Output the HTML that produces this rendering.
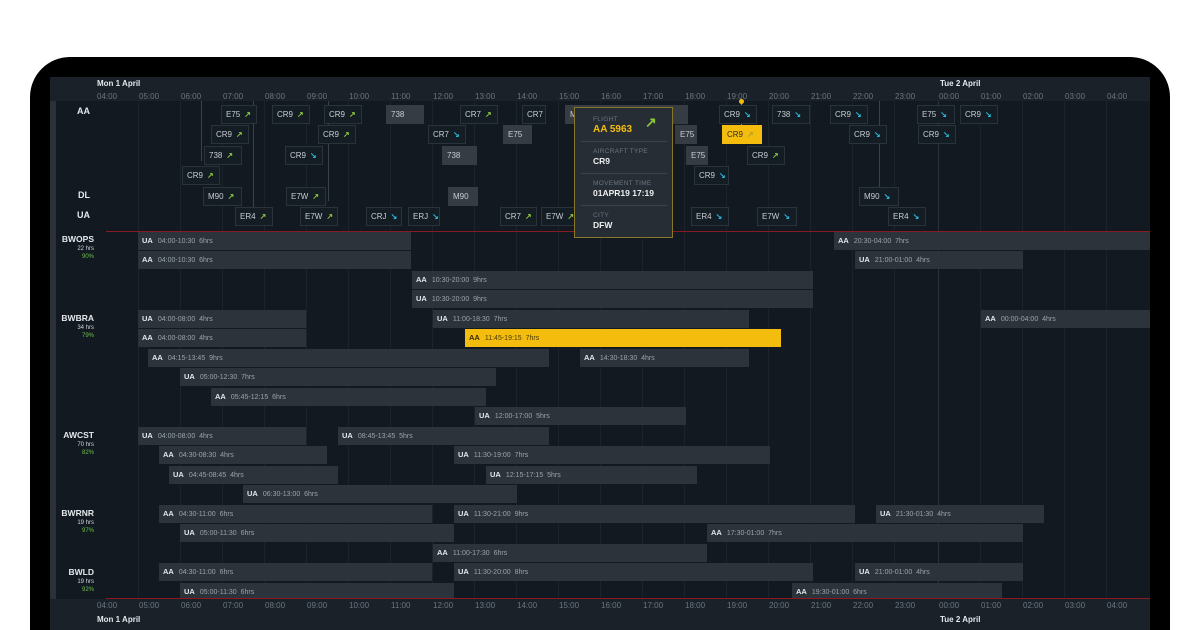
<!DOCTYPE html>
<html style="width:1200px;height:630px;overflow:hidden"><head><meta charset="utf-8"><style>
*{margin:0;padding:0;box-sizing:border-box}
html,body{width:1200px;height:630px;overflow:hidden}
body{background:#fff;position:relative;font-family:"Liberation Sans",sans-serif}
#dev{position:absolute;left:30px;top:57px;width:1140px;height:573px;background:#000;border-radius:40px 40px 0 0}
#scr{position:absolute;left:50px;top:77px;width:1100px;height:553px;background:#121921;overflow:hidden}
.a{position:absolute}
.hdr{left:0;top:0;width:1100px;height:24px;background:#1a2129}
.ftr{left:0;top:522px;width:1100px;height:31px;background:#1a2129}
.side{left:0;top:24px;width:6px;height:498px;background:#2a3138}
.hl{position:absolute;font-size:8px;color:#6b7680}
.day{position:absolute;font-size:8px;font-weight:bold;color:#e4e8ec}
.grid{position:absolute;width:1px;background:#1b232b}
.chip{position:absolute;height:19px;border:1px solid #2a333c;background:#141c24;font-size:8px;color:#c8cdd2;line-height:17px;padding-left:4px;white-space:nowrap}
.chip.f{background:#353c43;border-color:#353c43}
.chip.y{background:#f4bd0e;border-color:#f4bd0e;color:#2a2a1a}
.u{color:#8cc63f;font-weight:bold;margin-left:4px}
.d{color:#29b6d8;font-weight:bold;margin-left:4px}
.lbl{position:absolute;font-size:9px;font-weight:bold;color:#e4e8ec;text-align:right;width:40px}
.bar{position:absolute;height:18px;background:#2c333b;font-size:7px;color:#9aa3ab;line-height:18px;padding-left:4px;white-space:nowrap;overflow:hidden}
.bar b{color:#e4e8ec;margin-right:5px;font-size:7.5px}
.bar.y{background:#f4bd0e;color:#4a3a00}
.bar.y b{color:#3a2d00}
.g{position:absolute;text-align:right;width:44px;font-size:6px;line-height:8px;color:#d0d5da}
.g b{font-size:8.5px;color:#e4e8ec;display:block;line-height:11px}
.g i{font-style:normal;color:#6cc04a}
.red{position:absolute;left:56px;width:1044px;height:1px;background:#8a1a22}
.tip{left:524px;top:30px;width:99px;height:131px;background:#262d35;border:1px solid #8a7628}
.tip div{position:absolute;left:18px;font-size:6.5px;color:#6b7680;letter-spacing:.3px}
.tip p{position:absolute;left:18px;font-size:8.5px;font-weight:bold;color:#eef0f2}
.tip hr{position:absolute;left:6px;width:86px;border:0;border-top:1px solid #3a424a}
</style></head><body>
<div id="dev"></div>
<div id="scr">
<div class="a hdr"></div>
<div class="a ftr"></div>
<div class="a side"></div>

<div class="grid" style="left:88px;top:24px;height:498px"></div>
<div class="grid" style="left:130px;top:24px;height:498px"></div>
<div class="grid" style="left:172px;top:24px;height:498px"></div>
<div class="grid" style="left:214px;top:24px;height:498px"></div>
<div class="grid" style="left:256px;top:24px;height:498px"></div>
<div class="grid" style="left:298px;top:24px;height:498px"></div>
<div class="grid" style="left:340px;top:24px;height:498px"></div>
<div class="grid" style="left:382px;top:24px;height:498px"></div>
<div class="grid" style="left:424px;top:24px;height:498px"></div>
<div class="grid" style="left:466px;top:24px;height:498px"></div>
<div class="grid" style="left:508px;top:24px;height:498px"></div>
<div class="grid" style="left:550px;top:24px;height:498px"></div>
<div class="grid" style="left:592px;top:24px;height:498px"></div>
<div class="grid" style="left:634px;top:24px;height:498px"></div>
<div class="grid" style="left:676px;top:24px;height:498px"></div>
<div class="grid" style="left:718px;top:24px;height:498px"></div>
<div class="grid" style="left:760px;top:24px;height:498px"></div>
<div class="grid" style="left:802px;top:24px;height:498px"></div>
<div class="grid" style="left:844px;top:24px;height:498px"></div>
<div class="grid" style="left:888px;top:24px;height:498px;background:#2a323a"></div>
<div class="grid" style="left:930px;top:24px;height:498px"></div>
<div class="grid" style="left:972px;top:24px;height:498px"></div>
<div class="grid" style="left:1014px;top:24px;height:498px"></div>
<div class="grid" style="left:1056px;top:24px;height:498px"></div>

<div class="day" style="left:47px;top:2px">Mon 1 April</div>
<div class="day" style="left:890px;top:2px">Tue 2 April</div>
<div class="hl" style="left:47px;top:15px">04:00</div><div class="hl" style="left:89px;top:15px">05:00</div><div class="hl" style="left:131px;top:15px">06:00</div><div class="hl" style="left:173px;top:15px">07:00</div><div class="hl" style="left:215px;top:15px">08:00</div><div class="hl" style="left:257px;top:15px">09:00</div><div class="hl" style="left:299px;top:15px">10:00</div><div class="hl" style="left:341px;top:15px">11:00</div><div class="hl" style="left:383px;top:15px">12:00</div><div class="hl" style="left:425px;top:15px">13:00</div><div class="hl" style="left:467px;top:15px">14:00</div><div class="hl" style="left:509px;top:15px">15:00</div><div class="hl" style="left:551px;top:15px">16:00</div><div class="hl" style="left:593px;top:15px">17:00</div><div class="hl" style="left:635px;top:15px">18:00</div><div class="hl" style="left:677px;top:15px">19:00</div><div class="hl" style="left:719px;top:15px">20:00</div><div class="hl" style="left:761px;top:15px">21:00</div><div class="hl" style="left:803px;top:15px">22:00</div><div class="hl" style="left:845px;top:15px">23:00</div><div class="hl" style="left:889px;top:15px">00:00</div><div class="hl" style="left:931px;top:15px">01:00</div><div class="hl" style="left:973px;top:15px">02:00</div><div class="hl" style="left:1015px;top:15px">03:00</div><div class="hl" style="left:1057px;top:15px">04:00</div>

<div class="hl" style="left:47px;top:524px">04:00</div><div class="hl" style="left:89px;top:524px">05:00</div><div class="hl" style="left:131px;top:524px">06:00</div><div class="hl" style="left:173px;top:524px">07:00</div><div class="hl" style="left:215px;top:524px">08:00</div><div class="hl" style="left:257px;top:524px">09:00</div><div class="hl" style="left:299px;top:524px">10:00</div><div class="hl" style="left:341px;top:524px">11:00</div><div class="hl" style="left:383px;top:524px">12:00</div><div class="hl" style="left:425px;top:524px">13:00</div><div class="hl" style="left:467px;top:524px">14:00</div><div class="hl" style="left:509px;top:524px">15:00</div><div class="hl" style="left:551px;top:524px">16:00</div><div class="hl" style="left:593px;top:524px">17:00</div><div class="hl" style="left:635px;top:524px">18:00</div><div class="hl" style="left:677px;top:524px">19:00</div><div class="hl" style="left:719px;top:524px">20:00</div><div class="hl" style="left:761px;top:524px">21:00</div><div class="hl" style="left:803px;top:524px">22:00</div><div class="hl" style="left:845px;top:524px">23:00</div><div class="hl" style="left:889px;top:524px">00:00</div><div class="hl" style="left:931px;top:524px">01:00</div><div class="hl" style="left:973px;top:524px">02:00</div><div class="hl" style="left:1015px;top:524px">03:00</div><div class="hl" style="left:1057px;top:524px">04:00</div>
<div class="day" style="left:47px;top:538px">Mon 1 April</div>
<div class="day" style="left:890px;top:538px">Tue 2 April</div>

<div class="red" style="top:154px"></div>
<div class="red" style="top:521px"></div>

<div class="lbl" style="left:0;top:29px">AA</div>
<div class="lbl" style="left:0;top:113px">DL</div>
<div class="lbl" style="left:0;top:133px">UA</div>

<div class="grid" style="left:151px;top:24px;height:60px;background:#3a434b"></div>
<div class="grid" style="left:203px;top:24px;height:120px;background:#3a434b"></div>
<div class="grid" style="left:278px;top:24px;height:100px;background:#3a434b"></div>
<div class="grid" style="left:691px;top:24px;height:36px;background:#a08a2a"></div>
<div class="grid" style="left:829px;top:24px;height:100px;background:#3a434b"></div>

<div class="chip" style="left:171px;top:28px;width:36px">E75<span class="u">↗</span></div>
<div class="chip" style="left:222px;top:28px;width:38px">CR9<span class="u">↗</span></div>
<div class="chip" style="left:274px;top:28px;width:38px">CR9<span class="u">↗</span></div>
<div class="chip f" style="left:336px;top:28px;width:38px">738</div>
<div class="chip" style="left:410px;top:28px;width:38px">CR7<span class="u">↗</span></div>
<div class="chip" style="left:472px;top:28px;width:24px">CR7</div>
<div class="chip f" style="left:515px;top:28px;width:123px">M</div>
<div class="chip" style="left:669px;top:28px;width:38px">CR9<span class="d">↘</span></div>
<div class="chip" style="left:722px;top:28px;width:38px">738<span class="d">↘</span></div>
<div class="chip" style="left:780px;top:28px;width:38px">CR9<span class="d">↘</span></div>
<div class="chip" style="left:867px;top:28px;width:38px">E75<span class="d">↘</span></div>
<div class="chip" style="left:910px;top:28px;width:38px">CR9<span class="d">↘</span></div>

<div class="chip" style="left:161px;top:48px;width:38px">CR9<span class="u">↗</span></div>
<div class="chip" style="left:268px;top:48px;width:38px">CR9<span class="u">↗</span></div>
<div class="chip" style="left:378px;top:48px;width:38px">CR7<span class="d">↘</span></div>
<div class="chip f" style="left:453px;top:48px;width:29px">E75</div>
<div class="chip f" style="left:625px;top:48px;width:22px">E75</div>
<div class="chip y" style="left:672px;top:48px;width:40px">CR9<span class="u" style="color:#b0a020">↗</span></div>
<div class="chip" style="left:799px;top:48px;width:38px">CR9<span class="d">↘</span></div>
<div class="chip" style="left:868px;top:48px;width:38px">CR9<span class="d">↘</span></div>

<div class="chip" style="left:154px;top:69px;width:38px">738<span class="u">↗</span></div>
<div class="chip" style="left:235px;top:69px;width:38px">CR9<span class="d">↘</span></div>
<div class="chip f" style="left:392px;top:69px;width:35px">738</div>
<div class="chip f" style="left:636px;top:69px;width:22px">E75</div>
<div class="chip" style="left:697px;top:69px;width:38px">CR9<span class="u">↗</span></div>

<div class="chip" style="left:132px;top:89px;width:38px">CR9<span class="u">↗</span></div>
<div class="chip" style="left:644px;top:89px;width:35px">CR9<span class="d">↘</span></div>

<div class="chip" style="left:153px;top:110px;width:39px">M90<span class="u">↗</span></div>
<div class="chip" style="left:236px;top:110px;width:40px">E7W<span class="u">↗</span></div>
<div class="chip f" style="left:398px;top:110px;width:30px">M90</div>
<div class="chip" style="left:809px;top:110px;width:40px">M90<span class="d">↘</span></div>

<div class="chip" style="left:185px;top:130px;width:38px">ER4<span class="u">↗</span></div>
<div class="chip" style="left:250px;top:130px;width:38px">E7W<span class="u">↗</span></div>
<div class="chip" style="left:316px;top:130px;width:36px">CRJ<span class="d">↘</span></div>
<div class="chip" style="left:358px;top:130px;width:32px">ERJ<span class="d">↘</span></div>
<div class="chip" style="left:450px;top:130px;width:37px">CR7<span class="u">↗</span></div>
<div class="chip" style="left:491px;top:130px;width:35px">E7W<span class="u">↗</span></div>
<div class="chip" style="left:641px;top:130px;width:38px">ER4<span class="d">↘</span></div>
<div class="chip" style="left:707px;top:130px;width:40px">E7W<span class="d">↘</span></div>
<div class="chip" style="left:838px;top:130px;width:38px">ER4<span class="d">↘</span></div>

<div class="a" style="left:689px;top:22px;width:5px;height:5px;border-radius:50%;background:#f4bd0e"></div>

<div class="a tip">
<div style="top:8px">FLIGHT</div>
<p style="top:16px;color:#f4bd0e;font-size:10px">AA 5963</p>
<span style="position:absolute;left:70px;top:6px;color:#8cc63f;font-size:14px;font-weight:bold">↗</span>
<hr style="top:33px">
<div style="top:40px">AIRCRAFT TYPE</div>
<p style="top:48px">CR9</p>
<hr style="top:65px">
<div style="top:72px">MOVEMENT TIME</div>
<p style="top:80px">01APR19 17:19</p>
<hr style="top:97px">
<div style="top:104px">CITY</div>
<p style="top:112px">DFW</p>
</div>

<div class="g" style="left:0;top:157px"><b>BWOPS</b>22 hrs<br><i>90%</i></div>
<div class="g" style="left:0;top:236px"><b>BWBRA</b>34 hrs<br><i>79%</i></div>
<div class="g" style="left:0;top:353px"><b>AWCST</b>70 hrs<br><i>82%</i></div>
<div class="g" style="left:0;top:431px"><b>BWRNR</b>19 hrs<br><i>97%</i></div>
<div class="g" style="left:0;top:490px"><b>BWLD</b>19 hrs<br><i>92%</i></div>

<div class="a" style="left:0;top:155px;width:1100px;height:366px;overflow:hidden">
<div class="bar" style="left:88px;top:0px;width:273px"><b>UA</b>04:00-10:30 &nbsp;6hrs</div>
<div class="bar" style="left:784px;top:0px;width:316px"><b>AA</b>20:30-04:00 &nbsp;7hrs</div>
<div class="bar" style="left:88px;top:19px;width:273px"><b>AA</b>04:00-10:30 &nbsp;6hrs</div>
<div class="bar" style="left:805px;top:19px;width:168px"><b>UA</b>21:00-01:00 &nbsp;4hrs</div>
<div class="bar" style="left:362px;top:39px;width:401px"><b>AA</b>10:30-20:00 &nbsp;9hrs</div>
<div class="bar" style="left:362px;top:58px;width:401px"><b>UA</b>10:30-20:00 &nbsp;9hrs</div>
<div class="bar" style="left:88px;top:78px;width:168px"><b>UA</b>04:00-08:00 &nbsp;4hrs</div>
<div class="bar" style="left:383px;top:78px;width:316px"><b>UA</b>11:00-18:30 &nbsp;7hrs</div>
<div class="bar" style="left:931px;top:78px;width:169px"><b>AA</b>00:00-04:00 &nbsp;4hrs</div>
<div class="bar" style="left:88px;top:97px;width:168px"><b>AA</b>04:00-08:00 &nbsp;4hrs</div>
<div class="bar y" style="left:415px;top:97px;width:316px"><b>AA</b>11:45-19:15 &nbsp;7hrs</div>
<div class="bar" style="left:98px;top:117px;width:401px"><b>AA</b>04:15-13:45 &nbsp;9hrs</div>
<div class="bar" style="left:530px;top:117px;width:169px"><b>AA</b>14:30-18:30 &nbsp;4hrs</div>
<div class="bar" style="left:130px;top:136px;width:316px"><b>UA</b>05:00-12:30 &nbsp;7hrs</div>
<div class="bar" style="left:161px;top:156px;width:275px"><b>AA</b>05:45-12:15 &nbsp;6hrs</div>
<div class="bar" style="left:425px;top:175px;width:211px"><b>UA</b>12:00-17:00 &nbsp;5hrs</div>
<div class="bar" style="left:88px;top:195px;width:168px"><b>UA</b>04:00-08:00 &nbsp;4hrs</div>
<div class="bar" style="left:288px;top:195px;width:211px"><b>UA</b>08:45-13:45 &nbsp;5hrs</div>
<div class="bar" style="left:109px;top:214px;width:168px"><b>AA</b>04:30-08:30 &nbsp;4hrs</div>
<div class="bar" style="left:404px;top:214px;width:316px"><b>UA</b>11:30-19:00 &nbsp;7hrs</div>
<div class="bar" style="left:119px;top:234px;width:169px"><b>UA</b>04:45-08:45 &nbsp;4hrs</div>
<div class="bar" style="left:436px;top:234px;width:211px"><b>UA</b>12:15-17:15 &nbsp;5hrs</div>
<div class="bar" style="left:193px;top:253px;width:274px"><b>UA</b>06:30-13:00 &nbsp;6hrs</div>
<div class="bar" style="left:109px;top:273px;width:273px"><b>AA</b>04:30-11:00 &nbsp;6hrs</div>
<div class="bar" style="left:404px;top:273px;width:401px"><b>UA</b>11:30-21:00 &nbsp;9hrs</div>
<div class="bar" style="left:826px;top:273px;width:168px"><b>UA</b>21:30-01:30 &nbsp;4hrs</div>
<div class="bar" style="left:130px;top:292px;width:274px"><b>UA</b>05:00-11:30 &nbsp;6hrs</div>
<div class="bar" style="left:657px;top:292px;width:316px"><b>AA</b>17:30-01:00 &nbsp;7hrs</div>
<div class="bar" style="left:383px;top:312px;width:274px"><b>AA</b>11:00-17:30 &nbsp;6hrs</div>
<div class="bar" style="left:109px;top:331px;width:273px"><b>AA</b>04:30-11:00 &nbsp;6hrs</div>
<div class="bar" style="left:404px;top:331px;width:359px"><b>UA</b>11:30-20:00 &nbsp;8hrs</div>
<div class="bar" style="left:805px;top:331px;width:168px"><b>UA</b>21:00-01:00 &nbsp;4hrs</div>
<div class="bar" style="left:130px;top:351px;width:274px"><b>UA</b>05:00-11:30 &nbsp;6hrs</div>
<div class="bar" style="left:742px;top:351px;width:210px"><b>AA</b>19:30-01:00 &nbsp;6hrs</div>
</div>
</div>
</body></html>
